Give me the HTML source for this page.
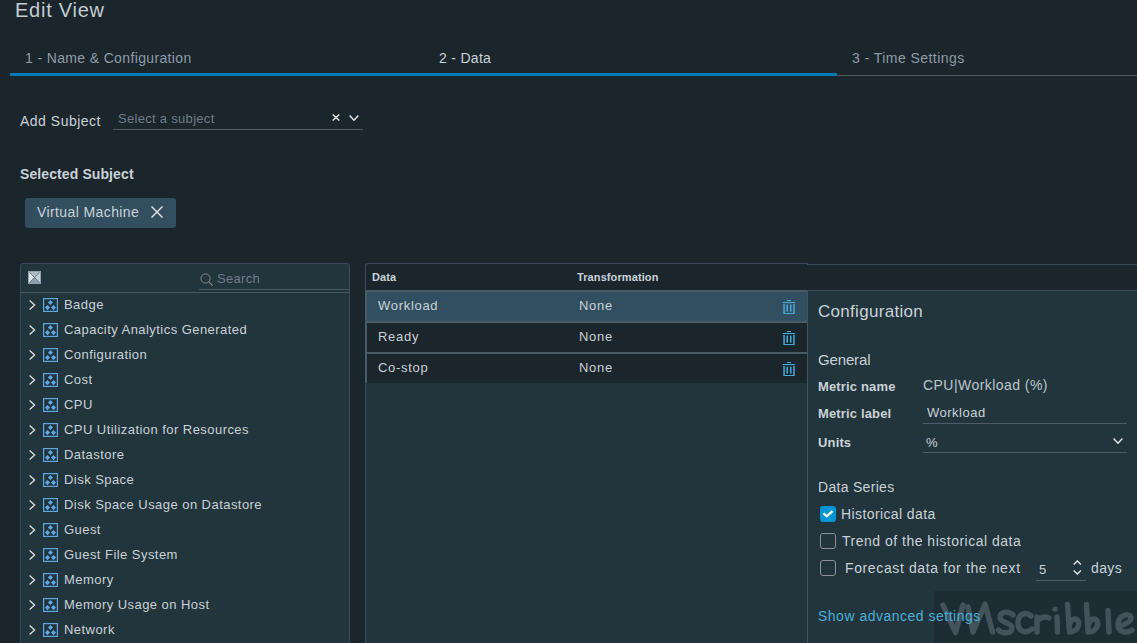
<!DOCTYPE html>
<html><head><meta charset="utf-8">
<style>
*{box-sizing:border-box;margin:0;padding:0}
html,body{width:1137px;height:643px;overflow:hidden;background:#1a252c;font-family:"Liberation Sans",sans-serif;position:relative}
.t{position:absolute;white-space:nowrap;line-height:1}
.abs{position:absolute}
svg{position:absolute;overflow:visible}
</style></head><body>

<!-- Title -->
<div class="t" style="left:15px;top:0px;font-size:20px;color:#c4cdd3;letter-spacing:0.75px">Edit View</div>

<!-- Tabs -->
<div class="t" style="left:25px;top:51px;font-size:14px;color:#8f9ca6;letter-spacing:0.36px">1 - Name &amp; Configuration</div>
<div class="t" style="left:439px;top:51px;font-size:14px;color:#c9d2d8;letter-spacing:0.3px">2 - Data</div>
<div class="t" style="left:852px;top:51px;font-size:14px;color:#8f9ca6;letter-spacing:0.45px">3 - Time Settings</div>
<div class="abs" style="left:837px;top:75px;width:300px;height:1px;background:#4f5b66"></div>
<div class="abs" style="left:10px;top:73px;width:827px;height:3px;background:#0079b8"></div>

<!-- Add subject -->
<div class="t" style="left:20px;top:114px;font-size:14px;color:#c9d2d8;letter-spacing:0.5px">Add Subject</div>
<div class="t" style="left:118px;top:112px;font-size:13px;color:#6f7d88;letter-spacing:0.3px">Select a subject</div>
<div class="abs" style="left:113px;top:129px;width:250px;height:1px;background:#4f5b66"></div>
<svg style="left:332px;top:114px" width="8" height="7"><path d="M0.7 0.5L7.3 6.5M7.3 0.5L0.7 6.5" stroke="#e6e6e6" stroke-width="1.5"/></svg>
<svg style="left:349px;top:115px" width="10" height="6"><path d="M0.6 0.6L5 5.2L9.4 0.6" stroke="#e6e6e6" stroke-width="1.5" fill="none"/></svg>

<!-- Selected subject -->
<div class="t" style="left:20px;top:167px;font-size:14px;font-weight:bold;color:#c9d2d8;letter-spacing:0.1px">Selected Subject</div>
<div class="abs" style="left:25px;top:198px;width:151px;height:30px;background:#334e5f;border-radius:3px"></div>
<div class="t" style="left:37px;top:205px;font-size:14px;color:#c9d2d8;letter-spacing:0.4px">Virtual Machine</div>
<svg style="left:151px;top:206px" width="12" height="12"><path d="M0.5 0.5L11.5 11.5M11.5 0.5L0.5 11.5" stroke="#e6e6e6" stroke-width="1.4"/></svg>

<!-- Left panel -->
<div class="abs" style="left:20px;top:263px;width:330px;height:420px;background:#22343c;border:1px solid #3d4a5c;border-radius:3px"></div>
<div class="abs" style="left:21px;top:292px;width:328px;height:1px;background:#4a5862"></div>
<svg style="left:28px;top:271px" width="13" height="13"><rect x="0" y="0" width="13" height="13" fill="#93a4ae"/>
<polygon points="1,1 12,1 6.5,6.5" fill="#aebcc5"/><polygon points="1,1 6.5,6.5 1,12" fill="#dce6eb"/><polygon points="12,1 6.5,6.5 12,12" fill="#c3ced5"/><polygon points="1,12 6.5,6.5 12,12" fill="#8c9fab"/>
<path d="M1.5 1.5L11.5 11.5M11.5 1.5L1.5 11.5" stroke="#5f7380" stroke-width="0.9"/></svg>
<svg style="left:200px;top:273px" width="13" height="13"><circle cx="5.5" cy="5.5" r="4.6" stroke="#8e8e8c" stroke-width="0.95" fill="none"/><path d="M8.8 8.8L12.6 12.6" stroke="#8e8e8c" stroke-width="1.1"/></svg>
<div class="t" style="left:217px;top:272px;font-size:13px;color:#6f7d88;letter-spacing:0.3px">Search</div>
<div class="abs" style="left:199px;top:289px;width:150px;height:1px;background:#4a5862"></div>

<div id="tree">
<svg style="left:29px;top:300px" width="7" height="10"><path d="M0.6 0.6L5.6 5L0.6 9.4" stroke="#e0e0e0" stroke-width="1.3" fill="none"/></svg><svg style="left:43px;top:298px" width="15" height="14"><use href="#ico"/></svg><div class="t" style="left:64px;top:298px;font-size:13px;color:#c9d2d8;letter-spacing:0.45px">Badge</div>
<svg style="left:29px;top:325px" width="7" height="10"><path d="M0.6 0.6L5.6 5L0.6 9.4" stroke="#e0e0e0" stroke-width="1.3" fill="none"/></svg><svg style="left:43px;top:323px" width="15" height="14"><use href="#ico"/></svg><div class="t" style="left:64px;top:323px;font-size:13px;color:#c9d2d8;letter-spacing:0.45px">Capacity Analytics Generated</div>
<svg style="left:29px;top:350px" width="7" height="10"><path d="M0.6 0.6L5.6 5L0.6 9.4" stroke="#e0e0e0" stroke-width="1.3" fill="none"/></svg><svg style="left:43px;top:348px" width="15" height="14"><use href="#ico"/></svg><div class="t" style="left:64px;top:348px;font-size:13px;color:#c9d2d8;letter-spacing:0.45px">Configuration</div>
<svg style="left:29px;top:375px" width="7" height="10"><path d="M0.6 0.6L5.6 5L0.6 9.4" stroke="#e0e0e0" stroke-width="1.3" fill="none"/></svg><svg style="left:43px;top:373px" width="15" height="14"><use href="#ico"/></svg><div class="t" style="left:64px;top:373px;font-size:13px;color:#c9d2d8;letter-spacing:0.45px">Cost</div>
<svg style="left:29px;top:400px" width="7" height="10"><path d="M0.6 0.6L5.6 5L0.6 9.4" stroke="#e0e0e0" stroke-width="1.3" fill="none"/></svg><svg style="left:43px;top:398px" width="15" height="14"><use href="#ico"/></svg><div class="t" style="left:64px;top:398px;font-size:13px;color:#c9d2d8;letter-spacing:0.45px">CPU</div>
<svg style="left:29px;top:425px" width="7" height="10"><path d="M0.6 0.6L5.6 5L0.6 9.4" stroke="#e0e0e0" stroke-width="1.3" fill="none"/></svg><svg style="left:43px;top:423px" width="15" height="14"><use href="#ico"/></svg><div class="t" style="left:64px;top:423px;font-size:13px;color:#c9d2d8;letter-spacing:0.45px">CPU Utilization for Resources</div>
<svg style="left:29px;top:450px" width="7" height="10"><path d="M0.6 0.6L5.6 5L0.6 9.4" stroke="#e0e0e0" stroke-width="1.3" fill="none"/></svg><svg style="left:43px;top:448px" width="15" height="14"><use href="#ico"/></svg><div class="t" style="left:64px;top:448px;font-size:13px;color:#c9d2d8;letter-spacing:0.45px">Datastore</div>
<svg style="left:29px;top:475px" width="7" height="10"><path d="M0.6 0.6L5.6 5L0.6 9.4" stroke="#e0e0e0" stroke-width="1.3" fill="none"/></svg><svg style="left:43px;top:473px" width="15" height="14"><use href="#ico"/></svg><div class="t" style="left:64px;top:473px;font-size:13px;color:#c9d2d8;letter-spacing:0.45px">Disk Space</div>
<svg style="left:29px;top:500px" width="7" height="10"><path d="M0.6 0.6L5.6 5L0.6 9.4" stroke="#e0e0e0" stroke-width="1.3" fill="none"/></svg><svg style="left:43px;top:498px" width="15" height="14"><use href="#ico"/></svg><div class="t" style="left:64px;top:498px;font-size:13px;color:#c9d2d8;letter-spacing:0.45px">Disk Space Usage on Datastore</div>
<svg style="left:29px;top:525px" width="7" height="10"><path d="M0.6 0.6L5.6 5L0.6 9.4" stroke="#e0e0e0" stroke-width="1.3" fill="none"/></svg><svg style="left:43px;top:523px" width="15" height="14"><use href="#ico"/></svg><div class="t" style="left:64px;top:523px;font-size:13px;color:#c9d2d8;letter-spacing:0.45px">Guest</div>
<svg style="left:29px;top:550px" width="7" height="10"><path d="M0.6 0.6L5.6 5L0.6 9.4" stroke="#e0e0e0" stroke-width="1.3" fill="none"/></svg><svg style="left:43px;top:548px" width="15" height="14"><use href="#ico"/></svg><div class="t" style="left:64px;top:548px;font-size:13px;color:#c9d2d8;letter-spacing:0.45px">Guest File System</div>
<svg style="left:29px;top:575px" width="7" height="10"><path d="M0.6 0.6L5.6 5L0.6 9.4" stroke="#e0e0e0" stroke-width="1.3" fill="none"/></svg><svg style="left:43px;top:573px" width="15" height="14"><use href="#ico"/></svg><div class="t" style="left:64px;top:573px;font-size:13px;color:#c9d2d8;letter-spacing:0.45px">Memory</div>
<svg style="left:29px;top:600px" width="7" height="10"><path d="M0.6 0.6L5.6 5L0.6 9.4" stroke="#e0e0e0" stroke-width="1.3" fill="none"/></svg><svg style="left:43px;top:598px" width="15" height="14"><use href="#ico"/></svg><div class="t" style="left:64px;top:598px;font-size:13px;color:#c9d2d8;letter-spacing:0.45px">Memory Usage on Host</div>
<svg style="left:29px;top:625px" width="7" height="10"><path d="M0.6 0.6L5.6 5L0.6 9.4" stroke="#e0e0e0" stroke-width="1.3" fill="none"/></svg><svg style="left:43px;top:623px" width="15" height="14"><use href="#ico"/></svg><div class="t" style="left:64px;top:623px;font-size:13px;color:#c9d2d8;letter-spacing:0.45px">Network</div>
</div>

<!-- Middle table -->
<div class="abs" style="left:365px;top:263px;width:443px;height:400px;border-left:1px solid #3d4a5c;border-top:1px solid #3d4a5c;border-radius:3px 0 0 0;background:#1a252c"></div>
<div class="abs" style="left:807px;top:264px;width:330px;height:1px;background:#3a4d58"></div>
<div class="abs" style="left:366px;top:383px;width:441px;height:260px;background:#22343c"></div>
<div class="t" style="left:372px;top:272px;font-size:11px;font-weight:bold;color:#c9d2d8;letter-spacing:0.1px">Data</div>
<div class="t" style="left:577px;top:272px;font-size:11px;font-weight:bold;color:#c9d2d8;letter-spacing:0.1px">Transformation</div>

<div class="abs" style="left:366px;top:290px;width:441px;height:2px;background:#4b5a64"></div>
<div class="abs" style="left:366px;top:292px;width:441px;height:29px;background:#324f61"></div>
<div class="abs" style="left:366px;top:321px;width:441px;height:2px;background:#4b5a64"></div>
<div class="abs" style="left:366px;top:352px;width:441px;height:2px;background:#4b5a64"></div>
<div class="abs" style="left:365px;top:290px;width:2px;height:93px;background:#4b5a64"></div>

<div class="t" style="left:378px;top:299px;font-size:13px;color:#c9d2d8;letter-spacing:0.7px">Workload</div>
<div class="t" style="left:579px;top:299px;font-size:13px;color:#c9d2d8;letter-spacing:0.7px">None</div>
<div class="t" style="left:378px;top:330px;font-size:13px;color:#c9d2d8;letter-spacing:0.7px">Ready</div>
<div class="t" style="left:579px;top:330px;font-size:13px;color:#c9d2d8;letter-spacing:0.7px">None</div>
<div class="t" style="left:378px;top:361px;font-size:13px;color:#c9d2d8;letter-spacing:0.7px">Co-stop</div>
<div class="t" style="left:579px;top:361px;font-size:13px;color:#c9d2d8;letter-spacing:0.7px">None</div>

<svg style="left:783px;top:300px" width="12" height="14"><use href="#trash"/></svg>
<svg style="left:783px;top:331px" width="12" height="14"><use href="#trash"/></svg>
<svg style="left:783px;top:362px" width="12" height="14"><use href="#trash"/></svg>

<!-- Config panel -->
<div class="abs" style="left:807px;top:290px;width:330px;height:353px;background:#22343c;border-left:1px solid #45525f;border-top:1px solid #3d4a5c"></div>
<div class="t" style="left:818px;top:303px;font-size:17px;color:#c9d2d8;letter-spacing:0.3px">Configuration</div>
<div class="t" style="left:818px;top:352px;font-size:15px;color:#c9d2d8;letter-spacing:-0.15px">General</div>
<div class="t" style="left:818px;top:380px;font-size:13px;font-weight:bold;color:#c9d2d8;letter-spacing:0.15px">Metric name</div>
<div class="t" style="left:818px;top:407px;font-size:13px;font-weight:bold;color:#c9d2d8;letter-spacing:0.15px">Metric label</div>
<div class="t" style="left:818px;top:436px;font-size:13px;font-weight:bold;color:#c9d2d8;letter-spacing:0.15px">Units</div>
<div class="t" style="left:923px;top:378px;font-size:14px;color:#bcc6cd;letter-spacing:0.45px">CPU|Workload (%)</div>
<div class="t" style="left:927px;top:406px;font-size:13px;color:#c9d2d8;letter-spacing:0.5px">Workload</div>
<div class="abs" style="left:923px;top:423px;width:204px;height:1px;background:#4f5b66"></div>
<div class="t" style="left:926px;top:436px;font-size:13px;color:#c9d2d8">%</div>
<svg style="left:1113px;top:438px" width="10" height="6"><path d="M0.6 0.6L5 5.2L9.4 0.6" stroke="#e6e6e6" stroke-width="1.5" fill="none"/></svg>
<div class="abs" style="left:923px;top:452px;width:204px;height:1px;background:#4f5b66"></div>

<div class="t" style="left:818px;top:480px;font-size:14px;color:#c9d2d8;letter-spacing:0.3px">Data Series</div>
<div class="abs" style="left:820px;top:506px;width:16px;height:16px;background:#0095d3;border-radius:3px"></div>
<svg style="left:820px;top:506px" width="16" height="16"><path d="M3.4 7.3L6.9 10.3L12.4 5.1" stroke="#fff" stroke-width="2.3" fill="none"/></svg>
<div class="t" style="left:841px;top:507px;font-size:14px;color:#c9d2d8;letter-spacing:0.4px">Historical data</div>
<div class="abs" style="left:820px;top:533px;width:16px;height:16px;border:1px solid #8a9299;border-radius:3px"></div>
<div class="t" style="left:842px;top:534px;font-size:14px;color:#c9d2d8;letter-spacing:0.5px">Trend of the historical data</div>
<div class="abs" style="left:820px;top:560px;width:16px;height:16px;border:1px solid #8a9299;border-radius:3px"></div>
<div class="t" style="left:845px;top:561px;font-size:14px;color:#c9d2d8;letter-spacing:0.62px">Forecast data for the next</div>
<div class="t" style="left:1039px;top:563px;font-size:13px;color:#c9d2d8">5</div>
<svg style="left:1073px;top:560px" width="9" height="15"><path d="M0.7 4.5L4.3 1L7.9 4.5M0.7 10.5L4.3 14L7.9 10.5" stroke="#e6e6e6" stroke-width="1.4" fill="none"/></svg>
<div class="abs" style="left:1036px;top:580px;width:50px;height:1px;background:#4f5b66"></div>
<div class="t" style="left:1091px;top:561px;font-size:14px;color:#c9d2d8;letter-spacing:0.4px">days</div>

<!-- watermark -->
<div class="abs" style="left:934px;top:591px;width:203px;height:52px;background:#1e2c34"></div>
<svg style="left:0;top:0" width="1137" height="643"><g fill="none" stroke="#42535c" stroke-width="5.4" stroke-linecap="round" stroke-linejoin="round">
<path d="M943 605 L955.5 632.5 L963 605"/>
<path d="M968 607 L973 632 L985 604 L992.5 632"/>
<path d="M1013 615 C1008 610 999 612 1000 618 C1001 623 1012 622 1012 628 C1012 634 1002 634 998.5 630"/>
<path d="M1031 616 C1026 611 1018 614 1018 623 C1018 632 1026 634 1032 629"/>
<path d="M1037 617 L1037 632 M1037 622 C1040 617 1044 616 1049 618"/>
<path d="M1057 617 L1057.5 632"/>
<path d="M1067.5 604.5 L1069.5 632 C1079 632 1082 620 1075 619 C1071 619 1069 624 1069 628"/>
<path d="M1086.5 604.5 L1088 632 C1098 632 1101 620 1094 619 C1090 619 1088 624 1088 628"/>
<path d="M1108 610.5 L1109 632"/>
<path d="M1119 626 C1125 625 1132 621 1131 617 C1130 613 1120 614 1118 623 C1117 632 1126 634 1132 630"/>
</g><circle cx="1055" cy="609" r="2.6" fill="#42535c"/></svg>
<div class="t" style="left:818px;top:609px;font-size:14px;color:#49afd9;letter-spacing:0.5px">Show advanced settings</div>

<!-- defs -->
<svg width="0" height="0" style="position:absolute">
<defs>
<g id="trash" fill="#45aad8">
<rect x="4" y="0" width="4" height="1.1"/>
<rect x="-0.2" y="2" width="12.3" height="1.1"/>
<rect x="0.3" y="4" width="1.5" height="10"/>
<rect x="10.2" y="4" width="1.5" height="10"/>
<rect x="1" y="13" width="10" height="1"/>
<rect x="3.4" y="4.6" width="1.6" height="7"/>
<rect x="6.9" y="4.6" width="1.6" height="7"/>
</g>
<g id="ico">
<rect x="0.6" y="0.6" width="13.8" height="12.8" fill="none" stroke="#5ea8e4" stroke-width="1.2"/>
<path d="M7.46 1.95L10.0 4.5L7.46 7.05L4.9 4.5Z M4.5 7.05L7.05 9.6L4.5 12.15L1.95 9.6Z M10.5 7.05L13.05 9.6L10.5 12.15L7.95 9.6Z" fill="#5ea8e4"/>
</g>
</defs>
</svg>

</body></html>
